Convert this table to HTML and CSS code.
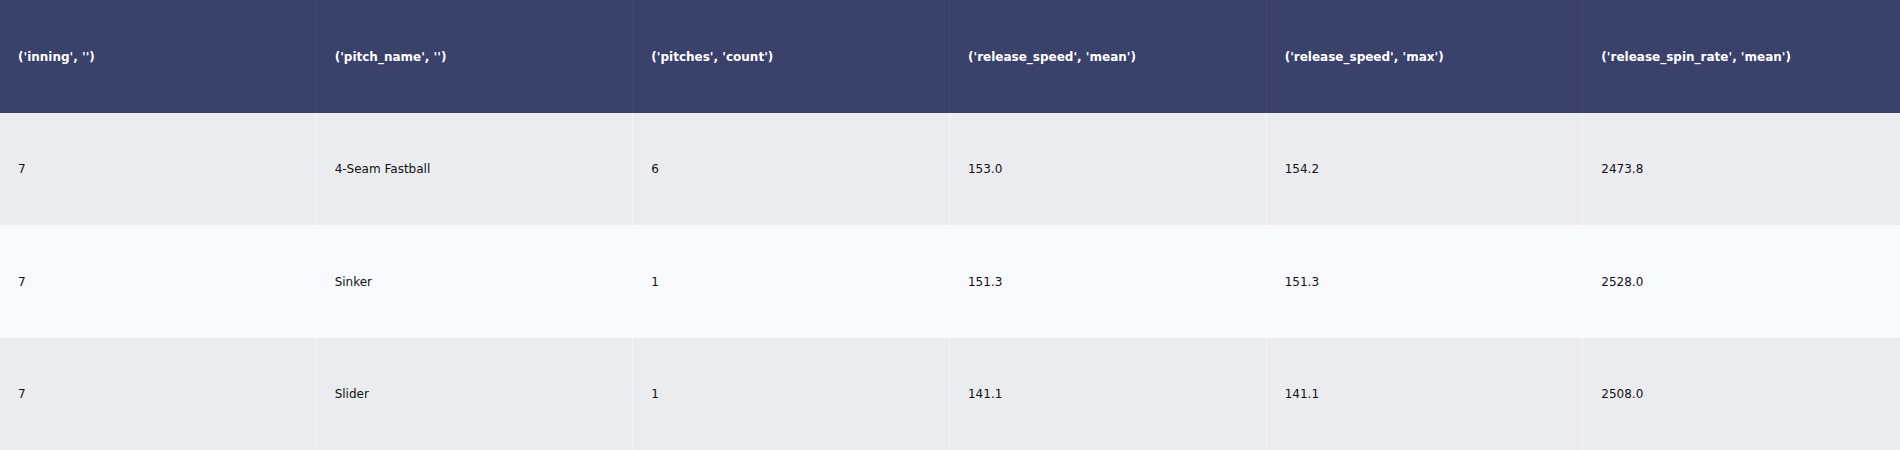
FILE: index.html
```html
<!DOCTYPE html>
<html>
<head>
<meta charset="utf-8">
<link rel="stylesheet" href="styles.css">
</head>
<body>
<div class="table">
  <div class="row head">
    <div class="cell">('inning', '')</div>
    <div class="cell">('pitch_name', '')</div>
    <div class="cell">('pitches', 'count')</div>
    <div class="cell">('release_speed', 'mean')</div>
    <div class="cell">('release_speed', 'max')</div>
    <div class="cell">('release_spin_rate', 'mean')</div>
  </div>
  <div class="row odd">
    <div class="cell">7</div>
    <div class="cell">4-Seam Fastball</div>
    <div class="cell">6</div>
    <div class="cell">153.0</div>
    <div class="cell">154.2</div>
    <div class="cell">2473.8</div>
  </div>
  <div class="row even">
    <div class="cell">7</div>
    <div class="cell">Sinker</div>
    <div class="cell">1</div>
    <div class="cell">151.3</div>
    <div class="cell">151.3</div>
    <div class="cell">2528.0</div>
  </div>
  <div class="row odd">
    <div class="cell">7</div>
    <div class="cell">Slider</div>
    <div class="cell">1</div>
    <div class="cell">141.1</div>
    <div class="cell">141.1</div>
    <div class="cell">2508.0</div>
  </div>
</div>
</body>
</html>
```

FILE: styles.css
```css
html, body {
  margin: 0;
  padding: 0;
  background: #f8f9fd;
}
.table {
  width: 1900px;
  height: 450px;
  display: grid;
  grid-template-rows: 113px 112px 113px 112px;
  font-family: "DejaVu Sans", Verdana, sans-serif;
  font-size: 12px;
  color: #111;
}
.row {
  display: grid;
  grid-template-columns: repeat(6, 1fr);
}
.cell {
  display: flex;
  align-items: center;
  padding-left: 18px;
  border-right: 1px solid rgba(255, 255, 255, 0.45);
  white-space: nowrap;
}
.cell:last-child {
  border-right: none;
}
.head {
  background: #3a416b;
  color: #ffffff;
  font-weight: bold;
}
.head .cell {
  border-right-color: #41476f;
}
.odd {
  background: #ebecf0;
}
.even {
  background: #f8f9fd;
}
```
